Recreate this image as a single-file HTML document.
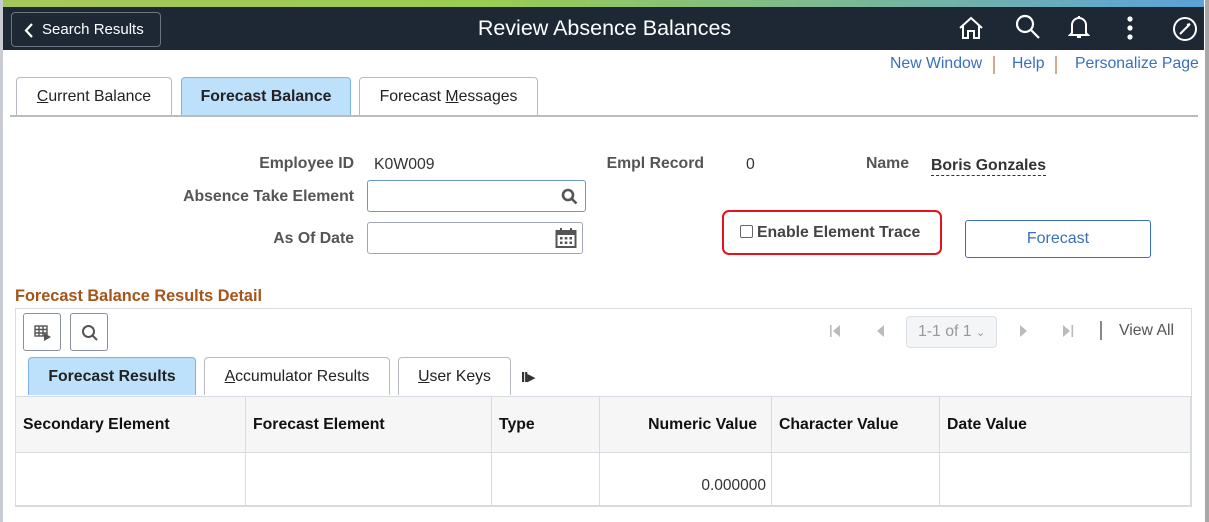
<!DOCTYPE html>
<html><head><style>
*{box-sizing:border-box;margin:0;padding:0}
body{width:1209px;height:522px;position:relative;background:#fff;font-family:"Liberation Sans",sans-serif;font-size:15.8px;color:#333;overflow:hidden}
.a{position:absolute}
.frame{left:0;top:0;width:1209px;height:522px;border-left:3px solid #c8ccd2;border-right:4px solid #a8a8a8}
.grad{left:3px;top:0;width:1201px;height:7px;background:linear-gradient(90deg,#a5c75a,#9acd50 40%,#5ba3d9)}
.bar{left:3px;top:7px;width:1201px;height:43px;background:#1e2834}
.back{left:11px;top:12px;width:150px;height:35px;border:1px solid #6b7480;border-radius:4px;color:#fff;font-size:15px;line-height:33px;padding-left:30px}
.title{left:0;width:1209px;top:16px;text-align:center;color:#fff;font-size:21.5px}
.lnk{color:#3a6fbd;font-size:15.8px;top:55px}
.sep{top:56px;width:2px;height:18px;background:#d6a98d}
.tab{height:38px;border:1px solid #b7bcc4;border-bottom:none;border-radius:4px 4px 0 0;background:#fff;text-align:center;font-size:15.8px;line-height:38px;color:#222}
.tab.on{background:#bde0fb;border-color:#7db4e8;font-weight:bold}
.lbl{font-weight:bold;color:#555;font-size:15.8px;text-align:right}
.inp{border:1px solid #a0a7b0;border-radius:3px;background:#fff}
th,td{border:1px solid #d7dce3}
th{background:#f6f6f6;text-align:left;font-size:15.8px;color:#111;padding-left:7px;height:56px}
td{height:53px}
</style></head><body>
<div class="a frame"></div>
<div class="a grad"></div>
<div class="a bar"></div>
<div class="a back"><svg class="a" style="left:12px;top:10px" width="10" height="15"><path d="M8 1 L2 7.5 L8 14" stroke="#fff" stroke-width="2.2" fill="none"/></svg>Search Results</div>
<div class="a title">Review Absence Balances</div>
<svg class="a" style="left:958px;top:16px" width="26" height="24" fill="none" stroke="#fff" stroke-width="2"><path d="M2 12 L13 2 L24 12 M5 10 V22 H10 V15 H16 V22 H21 V10"/></svg>
<svg class="a" style="left:1015px;top:14px" width="26" height="26" fill="none" stroke="#fff" stroke-width="2.2"><circle cx="10" cy="10" r="8"/><path d="M16 16 L24 24"/></svg>
<svg class="a" style="left:1068px;top:14px" width="22" height="26" fill="none" stroke="#fff" stroke-width="2"><path d="M4 19 V11 A7 7 0 0 1 18 11 V19 L20 21 H2 Z M9 23 H13"/><path d="M11 2 V4"/></svg>
<svg class="a" style="left:1126px;top:16px" width="8" height="24" fill="#fff"><circle cx="4" cy="3" r="2.6"/><circle cx="4" cy="12" r="2.6"/><circle cx="4" cy="21" r="2.6"/></svg>
<svg class="a" style="left:1172px;top:16px" width="26" height="26" fill="none" stroke="#fff" stroke-width="2"><circle cx="13" cy="13" r="11"/><path d="M8 18 L18 8 M18 8 L15 9"/></svg>
<div class="a lnk" style="left:890px">New Window</div><div class="a sep" style="left:993px"></div>
<div class="a lnk" style="left:1012px">Help</div><div class="a sep" style="left:1055px"></div>
<div class="a lnk" style="left:1075px">Personalize Page</div>
<div class="a" style="left:10px;top:115px;width:1188px;height:2px;background:#b9bcc0"></div>
<div class="a tab" style="left:16px;top:77px;width:156px"><u>C</u>urrent Balance</div>
<div class="a tab on" style="left:181px;top:77px;width:170px">Forecast Balance</div>
<div class="a tab" style="left:359px;top:77px;width:179px">Forecast <u>M</u>essages</div>
<div class="a lbl" style="left:200px;top:155px;width:154px">Employee ID</div>
<div class="a" style="left:374px;top:156px">K0W009</div>
<div class="a lbl" style="left:560px;top:155px;width:144px">Empl Record</div>
<div class="a" style="left:746px;top:156px">0</div>
<div class="a lbl" style="left:800px;top:155px;width:109px">Name</div>
<div class="a" style="left:931px;top:157px;font-weight:bold;color:#333;border-bottom:1px dashed #333">Boris Gonzales</div>
<div class="a lbl" style="left:150px;top:188px;width:204px">Absence Take Element</div>
<div class="a inp" style="left:367px;top:180px;width:219px;height:32px;border-color:#6b96c8"><svg class="a" style="left:193px;top:7px" width="17" height="17" fill="none" stroke="#555" stroke-width="2.6"><circle cx="7" cy="7" r="5"/><path d="M11 11 L15.5 15.5"/></svg></div>
<div class="a lbl" style="left:200px;top:230px;width:154px">As Of Date</div>
<div class="a inp" style="left:367px;top:222px;width:216px;height:32px"><svg class="a" style="left:187px;top:4px" width="22" height="22"><rect x="1.5" y="4" width="19" height="16" fill="none" stroke="#555" stroke-width="2"/><rect x="1" y="4" width="20" height="4" fill="#555"/><rect x="5" y="1" width="2" height="5" fill="#555"/><rect x="15" y="1" width="2" height="5" fill="#555"/><g fill="#555"><rect x="5" y="10" width="2.5" height="2.5"/><rect x="9.8" y="10" width="2.5" height="2.5"/><rect x="14.5" y="10" width="2.5" height="2.5"/><rect x="5" y="14.5" width="2.5" height="2.5"/><rect x="9.8" y="14.5" width="2.5" height="2.5"/><rect x="14.5" y="14.5" width="2.5" height="2.5"/></g></svg></div>
<div class="a" style="left:722px;top:210px;width:220px;height:45px;border:2px solid #e8101a;border-radius:7px"></div>
<div class="a" style="left:740px;top:225px;width:13px;height:13px;border:1px solid #666;border-radius:2px"></div>
<div class="a" style="left:757px;top:224px;font-weight:bold;color:#444">Enable Element Trace</div>
<div class="a" style="left:965px;top:220px;width:186px;height:38px;border:1px solid #3a6fbd;border-radius:3px;color:#3a6fbd;font-size:16px;text-align:center;line-height:36px">Forecast</div>
<div class="a" style="left:15px;top:287px;font-size:16.3px;font-weight:bold;color:#a5541a">Forecast Balance Results Detail</div>
<div class="a" style="left:15px;top:308px;width:1177px;height:199px;border:1px solid #d7dce3"></div>
<div class="a inp" style="left:23px;top:313px;width:38px;height:38px;border-color:#8a9099"><svg class="a" style="left:10px;top:11px" width="18" height="16"><g fill="none" stroke="#555" stroke-width="1.4"><rect x="1" y="1" width="12" height="10"/><path d="M1 4.5 H13 M1 8 H13 M5 1 V11 M9 1 V11"/></g><path d="M10 8 L17 12 L10 16 Z" fill="#555"/></svg></div>
<div class="a inp" style="left:70px;top:313px;width:38px;height:38px;border-color:#8a9099"><svg class="a" style="left:10px;top:10px" width="18" height="18" fill="none" stroke="#555" stroke-width="2"><circle cx="7.5" cy="7.5" r="5.5"/><path d="M11.5 11.5 L16 16"/></svg></div>
<svg class="a" style="left:830px;top:324px" width="12" height="14" fill="#bbb"><rect x="0" y="1" width="1.6" height="12"/><path d="M10 1 L3 7 L10 13 Z"/></svg>
<svg class="a" style="left:876px;top:324px" width="10" height="14" fill="#bbb"><path d="M8 1 L1 7 L8 13 Z"/></svg>
<div class="a" style="left:906px;top:316px;width:91px;height:32px;background:#f4f5f6;border:1px solid #dcdfe3;border-radius:4px;color:#999;font-size:15.8px;line-height:30px;padding-left:11px">1-1 of 1 <span style="font-size:11px">&#8964;</span></div>
<svg class="a" style="left:1019px;top:324px" width="10" height="14" fill="#bbb"><path d="M1 1 L8 7 L1 13 Z"/></svg>
<svg class="a" style="left:1062px;top:324px" width="12" height="14" fill="#bbb"><path d="M1 1 L8 7 L1 13 Z"/><rect x="9.5" y="1" width="1.6" height="12"/></svg>
<div class="a" style="left:1100px;top:321px;width:2px;height:19px;background:#888"></div>
<div class="a" style="left:1119px;top:322px;font-size:15.8px;color:#555">View All</div>
<div class="a tab on" style="left:28px;top:357px;width:168px">Forecast Results</div>
<div class="a tab" style="left:204px;top:357px;width:186px"><u>A</u>ccumulator Results</div>
<div class="a tab" style="left:398px;top:357px;width:113px"><u>U</u>ser Keys</div>
<div class="a" style="left:521px;top:368px;font-size:15px;color:#333;font-weight:bold;letter-spacing:-1px">II&#9656;</div>
<table class="a" style="left:15px;top:396px;width:1176px;border-collapse:collapse">
<tr><th style="width:230px">Secondary Element</th><th style="width:246px">Forecast Element</th><th style="width:108px">Type</th><th style="width:172px;text-align:right;padding-right:14px">Numeric Value</th><th style="width:168px">Character Value</th><th>Date Value</th></tr>
<tr><td></td><td></td><td></td><td style="text-align:right;padding-right:5px;padding-top:14px;font-size:15.5px">0.000000</td><td></td><td></td></tr>
</table>
</body></html>
